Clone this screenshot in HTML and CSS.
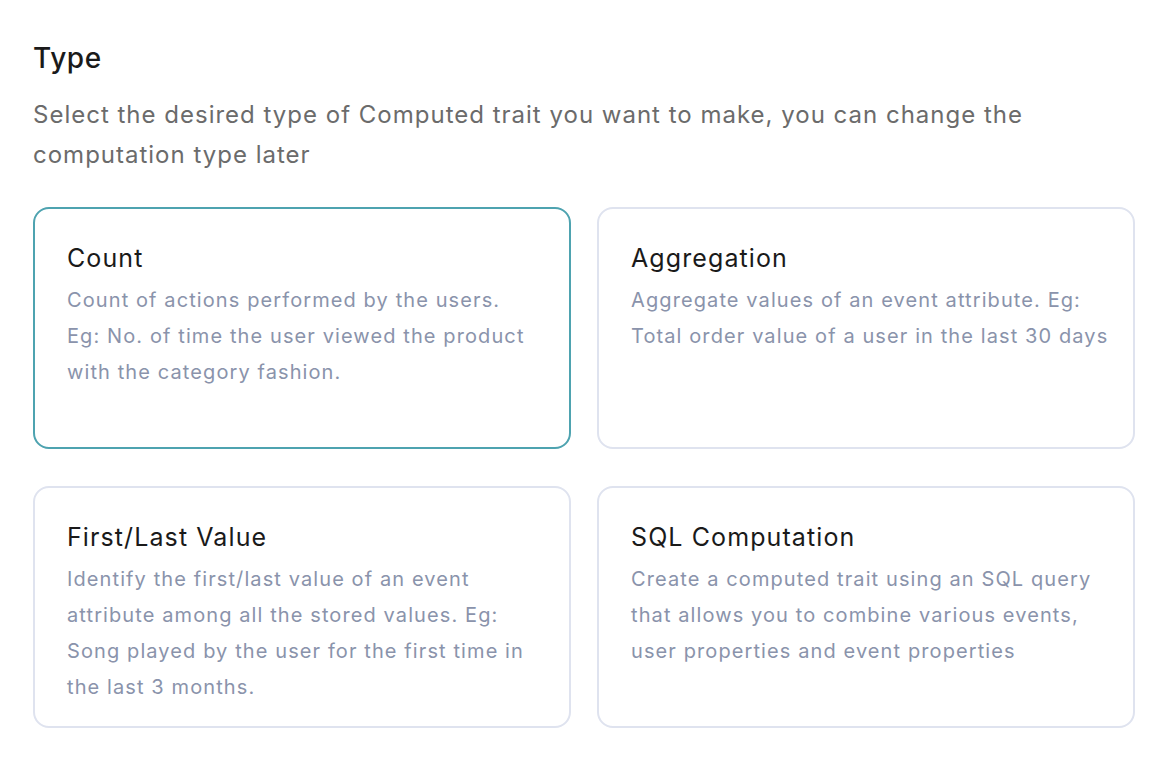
FILE: index.html
```html
<!DOCTYPE html>
<html>
<head>
<meta charset="utf-8">
<link rel="stylesheet" href="styles.css">
</head>
<body>
<main class="page">
  <h2 class="heading">Type</h2>
  <p class="lead">Select the desired type of Computed trait you want to make, you can change the computation type later</p>
  <div class="grid">
    <div class="card card--active">
      <div class="card-title">Count</div>
      <div class="card-desc">Count of actions performed by the users.<br>Eg: No. of time the user viewed the product with the category fashion.</div>
    </div>
    <div class="card">
      <div class="card-title">Aggregation</div>
      <div class="card-desc">Aggregate values of an event attribute. Eg: Total order value of a user in the last 30 days</div>
    </div>
    <div class="card">
      <div class="card-title">First/Last Value</div>
      <div class="card-desc">Identify the first/last value of an event attribute among all the stored values. Eg: Song played by the user for the first time in the last 3 months.</div>
    </div>
    <div class="card">
      <div class="card-title">SQL Computation</div>
      <div class="card-desc">Create a computed trait using an SQL query that allows you to combine various events, user properties and event properties</div>
    </div>
  </div>
</main>
</body>
</html>
```
FILE: styles.css
```css
* { box-sizing: border-box; }
html, body { margin: 0; padding: 0; background: #ffffff; }
body { font-family: "Inter", "Liberation Sans", sans-serif; }
.page { padding: 40px 21px 0 33px; }
.heading {
  margin: 0;
  font-size: 28px;
  line-height: 36px;
  font-weight: 500;
  letter-spacing: 0.6px;
  color: #1a1a1a;
}
.lead {
  margin: 19px 0 0;
  width: 1020px;
  font-size: 24px;
  line-height: 40px;
  letter-spacing: 1px;
  color: #6b6b6b;
}
.grid {
  margin-top: 32px;
  display: grid;
  grid-template-columns: 538px 538px;
  column-gap: 26px;
  row-gap: 37px;
}
.card {
  border: 2px solid #dfe3ef;
  border-radius: 16px;
  padding: 33px 24px 21px 32px;
  min-height: 242px;
}
.card--active { border-color: #4ea3b0; }
.card-title {
  font-size: 25px;
  line-height: 32px;
  letter-spacing: 1.1px;
  color: #1a1a1a;
}
.card-desc {
  margin-top: 8px;
  font-size: 20px;
  line-height: 36px;
  letter-spacing: 1.1px;
  color: #8a93ab;
}
```
